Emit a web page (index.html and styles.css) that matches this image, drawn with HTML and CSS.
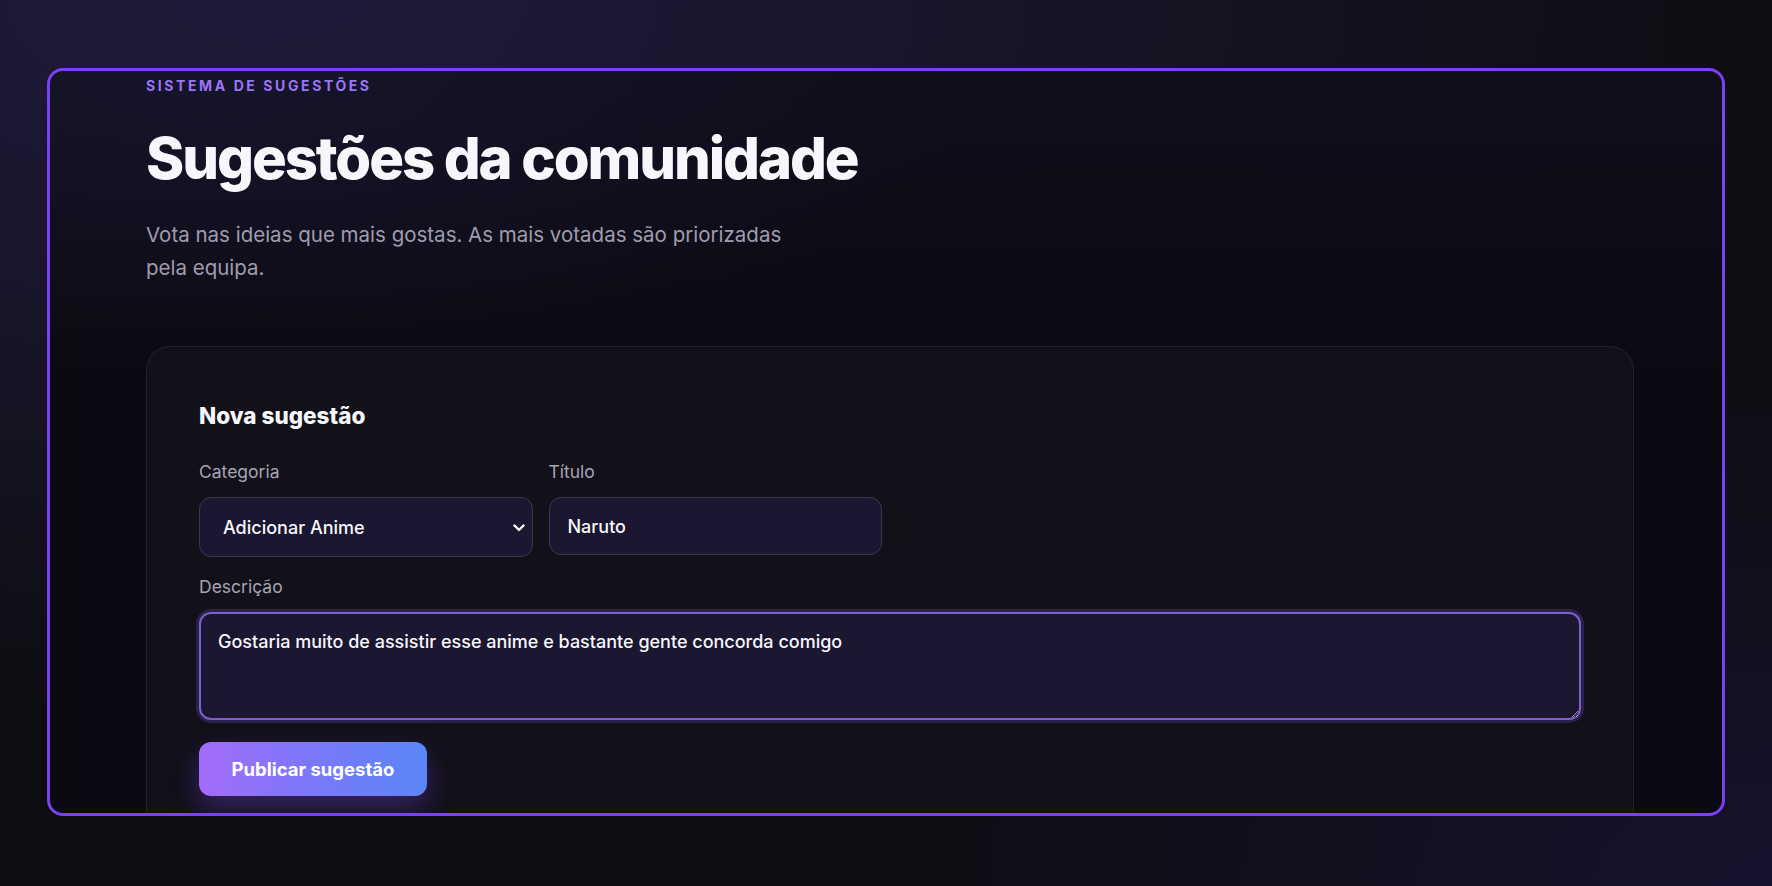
FILE: index.html
```html
<!DOCTYPE html>
<html lang="pt">
<head>
<meta charset="utf-8">
<title>Sugestões da comunidade</title>
<link rel="stylesheet" href="styles.css">
</head>
<body>
<main class="frame">
  <div class="content">
    <p class="eyebrow">SISTEMA DE SUGESTÕES</p>
    <h1 class="title">Sugestões da comunidade</h1>
    <p class="lead">Vota nas ideias que mais gostas. As mais votadas são priorizadas pela equipa.</p>

    <section class="card">
      <h2 class="card-title">Nova sugestão</h2>
      <form class="form-grid">
        <div class="field">
          <label class="label" for="cat">Categoria</label>
          <div class="select-wrap">
            <select id="cat" class="control select">
              <option>Adicionar Anime</option>
            </select>
            <svg class="chevron" width="12" height="8" viewBox="0 0 12 8"><path d="M1.5 1.5 L6 6 L10.5 1.5" fill="none" stroke="#ffffff" stroke-width="2.4" stroke-linecap="round" stroke-linejoin="round"/></svg>
          </div>
        </div>
        <div class="field">
          <label class="label" for="tit">Título</label>
          <input id="tit" class="control input" type="text" value="Naruto">
        </div>
        <div class="field field-wide">
          <label class="label" for="desc">Descrição</label>
          <textarea id="desc" class="control textarea">Gostaria muito de assistir esse anime e bastante gente concorda comigo</textarea>
        </div>
        <div class="field-wide">
          <button type="button" class="btn">Publicar sugestão</button>
        </div>
      </form>
    </section>
  </div>
</main>
</body>
</html>
```

FILE: styles.css
```css
* { box-sizing: border-box; }

html, body { height: 100%; }

body {
  margin: 0;
  font-family: Inter, "Noto Sans", sans-serif;
  color: #f4f3f8;
  background:
    radial-gradient(ellipse 85% 80% at 15% 0%, #201a39 0%, rgba(32,26,57,0.6) 45%, rgba(32,26,57,0) 100%),
    radial-gradient(ellipse 50% 60% at 100% 100%, #17122c 0%, rgba(23,18,44,0) 100%),
    #0e0d12;
  padding: 68px 47px 0 47px;
  overflow: hidden;
}

.frame {
  height: 748px;
  border: 3px solid #7b40f2;
  border-radius: 16px;
  overflow: hidden;
  background:
    radial-gradient(ellipse 45% 40% at 10% 0%, #161429 0%, rgba(22,20,41,0) 100%),
    linear-gradient(180deg, #100e1b 0%, #0b0a12 40%, #0b0a12 100%);
}

.content {
  padding: 6px 88px 0 96px;
}

.eyebrow {
  margin: 0;
  font-size: 14px;
  line-height: 17px;
  font-weight: 700;
  letter-spacing: 0.185em;
  color: #9a76f5;
}

.title {
  margin: 31px 0 0;
  font-size: 58px;
  line-height: 66px;
  font-weight: 800;
  letter-spacing: -0.036em;
  color: #f7f6fb;
}

.lead {
  margin: 27px 0 0;
  max-width: 650px;
  font-size: 20.5px;
  line-height: 33px;
  color: #a09cae;
}

.card {
  margin-top: 62px;
  background: #121019;
  border: 1px solid rgba(255,255,255,0.07);
  border-radius: 24px;
  padding: 55px 52px 60px;
}

.card-title {
  margin: 0;
  font-size: 22.5px;
  line-height: 28px;
  font-weight: 800;
  color: #f7f6fb;
}

.form-grid {
  margin-top: 32px;
  display: grid;
  grid-template-columns: repeat(4, 1fr);
  column-gap: 16px;
  row-gap: 20px;
}

.field {
  display: flex;
  flex-direction: column;
  gap: 15px;
}

.field-wide { grid-column: 1 / -1; }

.label {
  font-size: 17.5px;
  line-height: 20px;
  color: #a8a4b6;
}

.control {
  width: 100%;
  font-family: Inter, "Noto Sans", sans-serif;
  font-size: 18px;
  font-weight: 500;
  color: #f7f6fb;
  background: #1b1730;
  border: 1.5px solid #3b3751;
  border-radius: 12px;
  outline: none;
}

.select-wrap { position: relative; }

.select {
  height: 60px;
  padding: 0 40px 0 23px;
  appearance: none;
  -webkit-appearance: none;
}

.chevron {
  position: absolute;
  right: 8px;
  top: 27px;
}

.input {
  height: 58px;
  padding: 0 18px;
}

.textarea {
  display: block;
  height: 108px;
  padding: 16px 17px;
  line-height: 24px;
  resize: vertical;
  border: 2px solid #7c60c9;
  box-shadow: 0 0 0 3px rgba(110, 80, 210, 0.28);
}

.btn {
  margin-top: 2px;
  height: 54px;
  width: 228px;
  border: 0;
  border-radius: 12px;
  font-family: Inter, "Noto Sans", sans-serif;
  font-size: 18.5px;
  font-weight: 700;
  color: #ffffff;
  background: linear-gradient(90deg, #a36cf9 0%, #7a78f9 50%, #5a86f8 100%);
  box-shadow: 0 12px 28px rgba(124, 70, 240, 0.35);
}
```
